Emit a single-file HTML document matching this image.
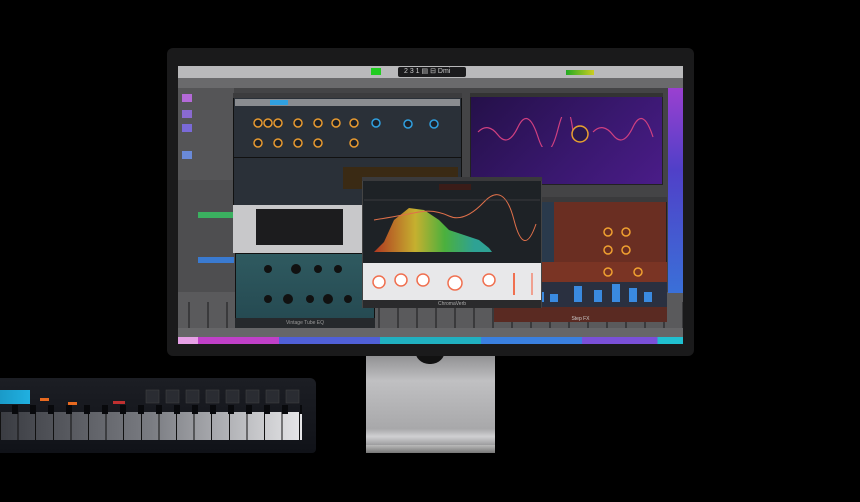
<!DOCTYPE html>
<html><head><style>
*{margin:0;padding:0;box-sizing:border-box}
body{width:860px;height:502px;background:#000;position:relative;overflow:hidden;font-family:"Liberation Sans",sans-serif}
.a{position:absolute}
</style></head><body>
<!-- stand -->
<div class="a" style="left:366px;top:352px;width:129px;height:96px;background:linear-gradient(#8a8a8c,#c0c0c2 30%,#a8a8aa 80%,#d0d0d2 88%,#8a8a8c)"></div>
<div class="a" style="left:366px;top:445px;width:129px;height:8px;background:linear-gradient(#bbb,#777)"></div>
<div class="a" style="left:415px;top:350px;width:30px;height:14px;border-radius:0 0 15px 15px;background:#111"></div>
<!-- monitor -->
<div class="a" style="left:167px;top:48px;width:527px;height:308px;background:#1a1a1b;border-radius:6px"></div>
<div class="a" style="left:178px;top:62px;width:505px;height:282px;background:#444446;overflow:hidden">
 <div class="a" style="left:0;top:0;width:505px;height:4px;background:#1a1a1b"></div>
 <div class="a" style="left:0;top:4px;width:505px;height:12px;background:#b9b9bb"></div>
 <div class="a" style="left:193px;top:6px;width:10px;height:7px;background:#2c2"></div>
 <div class="a" style="left:220px;top:5px;width:68px;height:10px;background:#1b1b1d;border-radius:2px;color:#ccc;font-size:7px;line-height:10px;padding-left:6px">2 3 1 ▤ ⊟ Dmi</div>
 <div class="a" style="left:388px;top:8px;width:28px;height:5px;background:linear-gradient(90deg,#2a2,#cc2)"></div>
 <div class="a" style="left:0;top:16px;width:505px;height:10px;background:#6a6a6c"></div>
 <div class="a" style="left:0;top:26px;width:56px;height:92px;background:#555557"></div>
 <div class="a" style="left:4px;top:32px;width:10px;height:8px;background:#b46ad8"></div>
 <div class="a" style="left:4px;top:48px;width:10px;height:8px;background:#8a6ad0"></div>
 <div class="a" style="left:4px;top:62px;width:10px;height:8px;background:#7a6ad8"></div>
 <div class="a" style="left:4px;top:89px;width:10px;height:8px;background:#6a8ad8"></div>
 <div class="a" style="left:0;top:118px;width:57px;height:158px;background:#4e4e50"></div>
 <div class="a" style="left:20px;top:150px;width:36px;height:6px;background:#3bb060"></div>
 <div class="a" style="left:20px;top:195px;width:36px;height:6px;background:#3a7ad0"></div>
 <div class="a" style="left:0;top:230px;width:505px;height:40px;background:#5a5a5c"></div>
 <div class="a" style="left:0;top:240px;width:505px;height:26px;background:repeating-linear-gradient(90deg,transparent 0 10px,#3a3a3c 10px 12px,transparent 12px 19px)"></div>
 <div class="a" style="left:0;top:266px;width:505px;height:9px;background:#666668"></div>
 <div class="a" style="left:0;top:275px;width:505px;height:7px;background:linear-gradient(90deg,#e6a0e6 0 4%,#c040c8 4% 20%,#5060d8 20% 40%,#20b0c0 40% 60%,#3a80e0 60% 80%,#7a50d8 80% 95%,#20c0d0 95%)"></div>
 <div class="a" style="left:490px;top:26px;width:15px;height:205px;background:linear-gradient(#9a40d0,#5040c8 40%,#3a70d8)"></div>
 <!-- purple window -->
 <div class="a" style="left:292px;top:31px;width:193px;height:92px;background:linear-gradient(135deg,#241048,#3a1870 60%,#4a1c88);border:1px solid #222"></div>
 <div class="a" style="left:292px;top:31px;width:193px;height:4px;background:#333"></div>
 <svg class="a" style="left:295px;top:55px" width="190" height="30"><path d="M5 15 Q15 5 25 18 T45 10 T65 20 T85 12 T100 15" stroke="#d04080" fill="none" stroke-width="1.2"/><path d="M120 15 Q130 5 140 18 T160 10 T180 20" stroke="#d04080" fill="none" stroke-width="1.2"/><circle cx="107" cy="17" r="8" fill="#2a1850" stroke="#e8a030" stroke-width="1.5"/></svg>
 <!-- alchemy -->
 <div class="a" style="left:55px;top:31px;width:229px;height:160px;background:#2a3038;border:1px solid #111"></div>
 <div class="a" style="left:55px;top:31px;width:229px;height:5px;background:#3c3c3e"></div>
 <div class="a" style="left:57px;top:37px;width:225px;height:7px;background:#8a8c90"></div>
 <div class="a" style="left:92px;top:38px;width:18px;height:5px;background:#30a0e0"></div>
 <div class="a" style="left:55px;top:95px;width:229px;height:1px;background:#111"></div>
 <div class="a" style="left:165px;top:105px;width:115px;height:22px;background:#3a2a14"></div>
 <div class="a" style="left:55px;top:143px;width:131px;height:48px;background:#c8c8ca"></div>
 <div class="a" style="left:78px;top:147px;width:87px;height:36px;background:#1c1c1e"></div>
 <svg class="a" style="left:58px;top:48px" width="222" height="45"><g fill="#1c2028" stroke="#e89a30" stroke-width="1.5"><circle cx="22" cy="13" r="4"/><circle cx="32" cy="13" r="4"/><circle cx="42" cy="13" r="4"/><circle cx="62" cy="13" r="4"/><circle cx="82" cy="13" r="4"/><circle cx="100" cy="13" r="4"/><circle cx="118" cy="13" r="4"/><circle cx="22" cy="33" r="4"/><circle cx="42" cy="33" r="4"/><circle cx="62" cy="33" r="4"/><circle cx="82" cy="33" r="4"/><circle cx="118" cy="33" r="4"/></g><g fill="#1c2028" stroke="#30a0e0" stroke-width="1.5"><circle cx="140" cy="13" r="4"/><circle cx="172" cy="14" r="4"/><circle cx="198" cy="14" r="4"/></g></svg>
 <!-- vintage tube EQ -->
 <div class="a" style="left:57px;top:191px;width:140px;height:75px;background:linear-gradient(#2f5a60,#244850);border:1px solid #111"></div>
 <div class="a" style="left:57px;top:256px;width:140px;height:10px;background:#26292c;color:#999;font-size:5px;text-align:center;line-height:10px">Vintage Tube EQ</div>
 <svg class="a" style="left:60px;top:195px" width="135" height="60"><g fill="#111"><circle cx="30" cy="12" r="4"/><circle cx="58" cy="12" r="5"/><circle cx="80" cy="12" r="4"/><circle cx="100" cy="12" r="4"/><circle cx="30" cy="42" r="4"/><circle cx="50" cy="42" r="5"/><circle cx="72" cy="42" r="4"/><circle cx="90" cy="42" r="5"/><circle cx="110" cy="42" r="4"/></g></svg>
 <!-- step fx -->
 <div class="a" style="left:316px;top:135px;width:173px;height:125px;background:#6a2e22;border:1px solid #222"></div>
 <div class="a" style="left:316px;top:135px;width:173px;height:5px;background:#3a3a3c"></div>
 <div class="a" style="left:316px;top:140px;width:60px;height:60px;background:#2a3a4c"></div>
 <div class="a" style="left:316px;top:200px;width:173px;height:20px;background:#7a3424"></div>
 <div class="a" style="left:316px;top:220px;width:173px;height:25px;background:#2a3040"></div>
 <svg class="a" style="left:316px;top:220px" width="173" height="25"><g fill="#3a8ae0"><rect x="20" y="8" width="8" height="12"/><rect x="42" y="10" width="8" height="10"/><rect x="56" y="12" width="8" height="8"/><rect x="80" y="4" width="8" height="16"/><rect x="100" y="8" width="8" height="12"/><rect x="118" y="2" width="8" height="18"/><rect x="135" y="6" width="8" height="14"/><rect x="150" y="10" width="8" height="10"/></g></svg>
 <div class="a" style="left:316px;top:245px;width:173px;height:15px;background:#5a2a22;color:#ccc;font-size:5px;text-align:center;line-height:24px">Step FX</div>
 <svg class="a" style="left:330px;top:160px" width="150" height="60"><g fill="none" stroke="#f0a030" stroke-width="1.5"><circle cx="100" cy="10" r="4"/><circle cx="118" cy="10" r="4"/><circle cx="100" cy="28" r="4"/><circle cx="118" cy="28" r="4"/><circle cx="100" cy="50" r="4"/><circle cx="130" cy="50" r="4"/></g></svg>
 <!-- chromaverb -->
 <div class="a" style="left:184px;top:115px;width:180px;height:131px;background:#1e2226;border:1px solid #444"></div>
 <div class="a" style="left:184px;top:115px;width:180px;height:4px;background:#3a3a3c"></div>
 <div class="a" style="left:261px;top:122px;width:32px;height:6px;background:#3a1c18"></div>
 <svg class="a" style="left:186px;top:128px" width="176" height="70"><defs><linearGradient id="g" x1="0" x2="1"><stop offset="0" stop-color="#c03a20"/><stop offset=".35" stop-color="#d8c030"/><stop offset=".6" stop-color="#50c040"/><stop offset=".85" stop-color="#30b0a0"/></linearGradient></defs><path d="M10 62 L20 52 L30 30 L45 18 L60 20 L75 30 L85 40 L100 45 L115 50 L125 58 L128 62 Z" fill="url(#g)" opacity=".9"/><path d="M10 30 Q40 25 55 22 T85 26 T120 12 T150 30 T172 34" stroke="#e0704a" fill="none" stroke-width="1"/><line x1="0" y1="10" x2="176" y2="10" stroke="#555" stroke-width=".5"/></svg>
 <div class="a" style="left:185px;top:201px;width:178px;height:37px;background:#e8e8ea"></div>
 <svg class="a" style="left:185px;top:201px" width="178" height="37"><g fill="#fff" stroke="#f07050" stroke-width="1.5"><circle cx="16" cy="19" r="6"/><circle cx="38" cy="17" r="6"/><circle cx="60" cy="17" r="6"/><circle cx="92" cy="20" r="7"/><circle cx="126" cy="17" r="6"/></g><rect x="150" y="10" width="2" height="22" fill="#f07050"/><rect x="168" y="10" width="2" height="22" fill="#f0a090"/></svg>
 <div class="a" style="left:185px;top:238px;width:178px;height:8px;background:#2a2a2c;color:#aaa;font-size:5px;text-align:center;line-height:8px">ChromaVerb</div>
</div>
<!-- keyboard -->
<div class="a" style="left:0;top:378px;width:316px;height:75px;background:linear-gradient(#1c1e24,#101218);border-radius:0 6px 4px 0"></div>
<div class="a" style="left:0;top:390px;width:30px;height:14px;background:linear-gradient(90deg,#1a9ac8,#20b0e0)"></div>
<div class="a" style="left:40px;top:398px;width:9px;height:3px;background:#e86a20"></div>
<div class="a" style="left:68px;top:402px;width:9px;height:3px;background:#e86a20"></div>
<div class="a" style="left:113px;top:401px;width:12px;height:3px;background:#c03030"></div>
<svg class="a" style="left:145px;top:388px" width="160" height="25"><g fill="#2a2c32" stroke="#444" stroke-width=".5"><rect x="1" y="2" width="13" height="13"/><rect x="21" y="2" width="13" height="13"/><rect x="41" y="2" width="13" height="13"/><rect x="61" y="2" width="13" height="13"/><rect x="81" y="2" width="13" height="13"/><rect x="101" y="2" width="13" height="13"/><rect x="121" y="2" width="13" height="13"/><rect x="141" y="2" width="13" height="13"/></g></svg>
<div class="a" style="left:0;top:412px;width:302px;height:28px;background:repeating-linear-gradient(90deg,#111 0 1px,transparent 1px 17.6px),linear-gradient(90deg,#3a3c42,#7a7c82 50%,#e6e6e8)"></div>
<div class="a" style="left:0;top:405px;width:302px;height:9px;background:repeating-linear-gradient(90deg,transparent 0 12px,#08090c 12px 18px)"></div>
</body></html>
